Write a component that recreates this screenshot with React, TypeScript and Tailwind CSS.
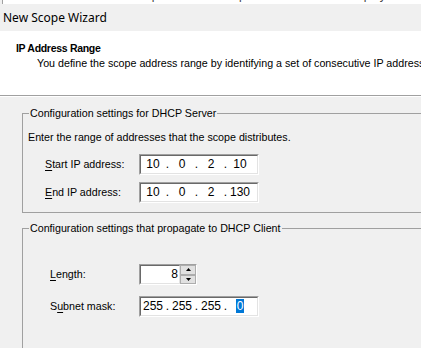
import React from "react";

type IpProps = {
  parts: string[];
  selectLast?: boolean;
};

// sunken win32 edit box
function Sunken({ className, children }: { className?: string; children: React.ReactNode }) {
  return (
    <div className={`border border-t-[#a0a0a0] border-l-[#a0a0a0] border-r-white border-b-white ${className ?? ""}`}>
      <div className="h-full border border-t-[#696969] border-l-[#696969] border-r-[#e3e3e3] border-b-[#e3e3e3] bg-white">
        {children}
      </div>
    </div>
  );
}

function IpField({ parts, selectLast }: IpProps) {
  return (
    <Sunken className="w-[120px] h-[21px]">
      <div className="flex items-center h-full pl-[1px] text-[12px] leading-[13px]">
        {parts.map((p, i) => (
          <React.Fragment key={i}>
            <div className="w-[22px] text-center">
              {selectLast && i === parts.length - 1 ? (
                <span className="bg-[#0078d7] text-white px-[1px]">{p}</span>
              ) : (
                p
              )}
            </div>
            {i < parts.length - 1 && <div className="w-[7px] text-center">.</div>}
          </React.Fragment>
        ))}
      </div>
    </Sunken>
  );
}

function Spinner({ value }: { value: string }) {
  return (
    <div className="flex w-[58px] h-[21px] border border-t-[#a0a0a0] border-l-[#a0a0a0] border-r-white border-b-white">
      <div className="flex-1 border border-t-[#696969] border-l-[#696969] border-r-[#e3e3e3] border-b-[#e3e3e3] bg-white flex items-center justify-end pr-[1px] text-[12px] leading-[13px]">
        {value}
      </div>
      <div className="w-[16px] flex flex-col bg-white">
        <div className="flex-1 flex items-center justify-center bg-[#e1e1e1] border border-[#adadad]">
          <svg width="5" height="3" viewBox="0 0 5 3">
            <path d="M2.5 0 L5 3 L0 3 Z" fill="#000" />
          </svg>
        </div>
        <div className="flex-1 flex items-center justify-center bg-[#e1e1e1] border border-[#adadad]">
          <svg width="5" height="3" viewBox="0 0 5 3">
            <path d="M0 0 L5 0 L2.5 3 Z" fill="#000" />
          </svg>
        </div>
      </div>
    </div>
  );
}

function Row({ label, children, className }: { label: React.ReactNode; children: React.ReactNode; className?: string }) {
  return (
    <div className={`flex items-center ${className ?? ""}`}>
      <div className="shrink-0">{label}</div>
      {children}
    </div>
  );
}

export default function App() {
  return (
    <div className="w-[421px] h-[348px] overflow-hidden bg-[#f0f0f0] text-black text-[10.7px] leading-[13px] font-['Liberation_Sans',Arial,sans-serif]">
      {/* bit of the window behind */}
      <div className="h-[4px] overflow-hidden bg-white border-l border-[#a0a0a0] ml-[2px]">
        <div className="-mt-[11px] pl-[18px] text-[12px] text-[#444] whitespace-nowrap">
          Enter a name and description for this scope. This information helps you
        </div>
      </div>

      <div className="h-[27px] flex items-center pl-[3px] text-[12px] font-['Noto_Sans','Open_Sans',sans-serif]">
        New Scope Wizard
      </div>

      <div className="h-[65px] bg-white border-b border-[#a0a0a0] pt-[11px] whitespace-nowrap">
        <div className="pl-[16px] font-bold text-[10.5px] tracking-[-0.3px]">IP Address Range</div>
        <div className="pl-[37px] mt-[2px]">
          You define the scope address range by identifying a set of consecutive IP address
        </div>
      </div>
      <div className="h-px bg-white" />

      <fieldset className="ml-[22px] mt-[10px] w-[440px] border border-[#a0a0a0] pl-[5px] pb-[9px]">
        <legend className="ml-[1px] px-[1px]">Configuration settings for DHCP Server</legend>
        <div className="mt-[11px]">Enter the range of addresses that the scope distributes.</div>
        <Row
          className="mt-[10px] ml-[17px]"
          label={
            <div className="w-[94px]">
              <span className="underline underline-offset-2">S</span>tart IP address:
            </div>
          }
        >
          <IpField parts={["10", "0", "2", "10"]} />
        </Row>
        <Row
          className="mt-[7px] ml-[17px]"
          label={
            <div className="w-[94px]">
              <span className="underline underline-offset-2">E</span>nd IP address:
            </div>
          }
        >
          <IpField parts={["10", "0", "2", "130"]} />
        </Row>
      </fieldset>

      <fieldset className="ml-[22px] mt-[9px] w-[440px] h-[160px] border border-[#a0a0a0] pl-[5px]">
        <legend className="ml-[1px] px-[1px]">Configuration settings that propagate to DHCP Client</legend>
        <Row
          className="mt-[29px] ml-[22px]"
          label={
            <div className="w-[89px]">
              <span className="underline underline-offset-2">L</span>ength:
            </div>
          }
        >
          <Spinner value="8" />
        </Row>
        <Row
          className="mt-[11px] ml-[22px]"
          label={
            <div className="w-[89px]">
              S<span className="underline underline-offset-2">u</span>bnet mask:
            </div>
          }
        >
          <IpField parts={["255", "255", "255", "0"]} selectLast />
        </Row>
      </fieldset>
    </div>
  );
}
